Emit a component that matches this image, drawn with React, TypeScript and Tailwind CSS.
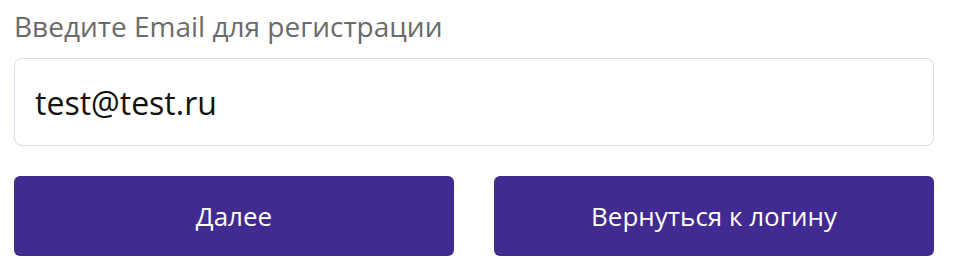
export default function App() {
  return (
    <div className="w-[955px] h-[273px] bg-white pl-[14px] pr-[21px] pt-[7px] font-['Open_Sans',sans-serif]">
      <label className="block text-[28px] leading-[38px] text-[#6b6b6b]">
        Введите Email для регистрации
      </label>
      <div className="mt-[13px] h-[88px] rounded-[8px] border border-[#dadaea] flex items-center px-[20px] pt-[2px]">
        <span className="text-[32px] text-[#111111]">test@test.ru</span>
      </div>
      <div className="mt-[30px] grid grid-cols-2 gap-[40px]">
        <button className="h-[80px] rounded-[6px] bg-[#412a90] text-white text-[26px]">
          Далее
        </button>
        <button className="h-[80px] rounded-[6px] bg-[#412a90] text-white text-[26px]">
          Вернуться к логину
        </button>
      </div>
    </div>
  );
}
